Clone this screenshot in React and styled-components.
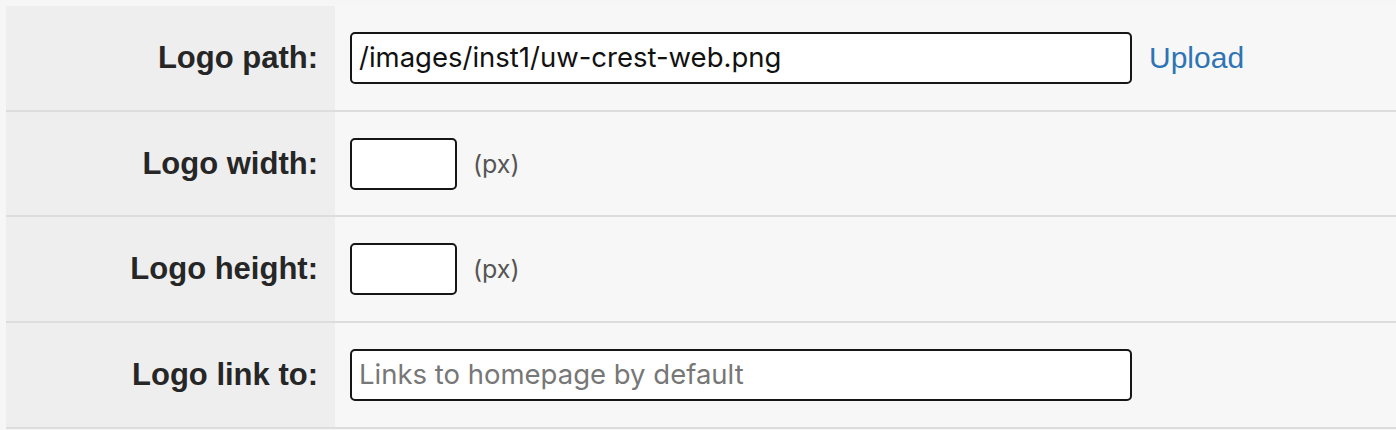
import styled, { createGlobalStyle } from 'styled-components';

let Global = createGlobalStyle`
  html, body {
    margin: 0;
    padding: 0;
    background: #f6f6f6;
  }
`;

let Page = styled.div`
  padding: 6px 0 0 6px;
  background: #f6f6f6;
  min-height: 430px;
  box-sizing: border-box;
`;

let Row = styled.div`
  display: flex;
  height: 103.7px;
  border-bottom: 2px solid #dddddd;
`;

let Label = styled.div`
  width: 329px;
  flex: none;
  background: #eeeeee;
  display: flex;
  align-items: center;
  justify-content: flex-end;
  padding-right: 17px;
  box-sizing: border-box;
  font-family: "Liberation Sans", Arial, sans-serif;
  font-weight: bold;
  font-size: 31px;
  color: #262626;
`;

let Field = styled.div`
  flex: 1;
  background: #f7f7f7;
  display: flex;
  align-items: center;
  padding-left: 15px;
  gap: 16px;
`;

let TextInput = styled.input`
  width: ${ props => props.w }px;
  height: 52px;
  box-sizing: border-box;
  border: 2px solid #161616;
  border-radius: 5px;
  background: #ffffff;
  padding: 0 7px 2px 7px;
  font-family: Inter, "Noto Sans", sans-serif;
  font-size: 27.5px;
  color: #111;
  outline: none;

  &::placeholder {
    color: #777777;
  }
`;

let Unit = styled.span`
  font-family: Inter, "Noto Sans", sans-serif;
  font-size: 25px;
  color: #555555;
`;

let UploadLink = styled.a`
  font-family: "Liberation Sans", Arial, sans-serif;
  font-size: 30px;
  color: #2e74b5;
  text-decoration: none;
  margin-left: 1px;
`;

function App() {
  return (
    <Page>
      <Global />
      <Row>
        <Label>Logo path:</Label>
        <Field>
          <TextInput w={ 782 } defaultValue="/images/inst1/uw-crest-web.png" />
          <UploadLink href="#">Upload</UploadLink>
        </Field>
      </Row>
      <Row>
        <Label>Logo width:</Label>
        <Field>
          <TextInput w={ 107 } />
          <Unit>(px)</Unit>
        </Field>
      </Row>
      <Row>
        <Label>Logo height:</Label>
        <Field>
          <TextInput w={ 107 } />
          <Unit>(px)</Unit>
        </Field>
      </Row>
      <Row>
        <Label>Logo link to:</Label>
        <Field>
          <TextInput w={ 782 } placeholder="Links to homepage by default" />
        </Field>
      </Row>
    </Page>
  );
}

export default App;
